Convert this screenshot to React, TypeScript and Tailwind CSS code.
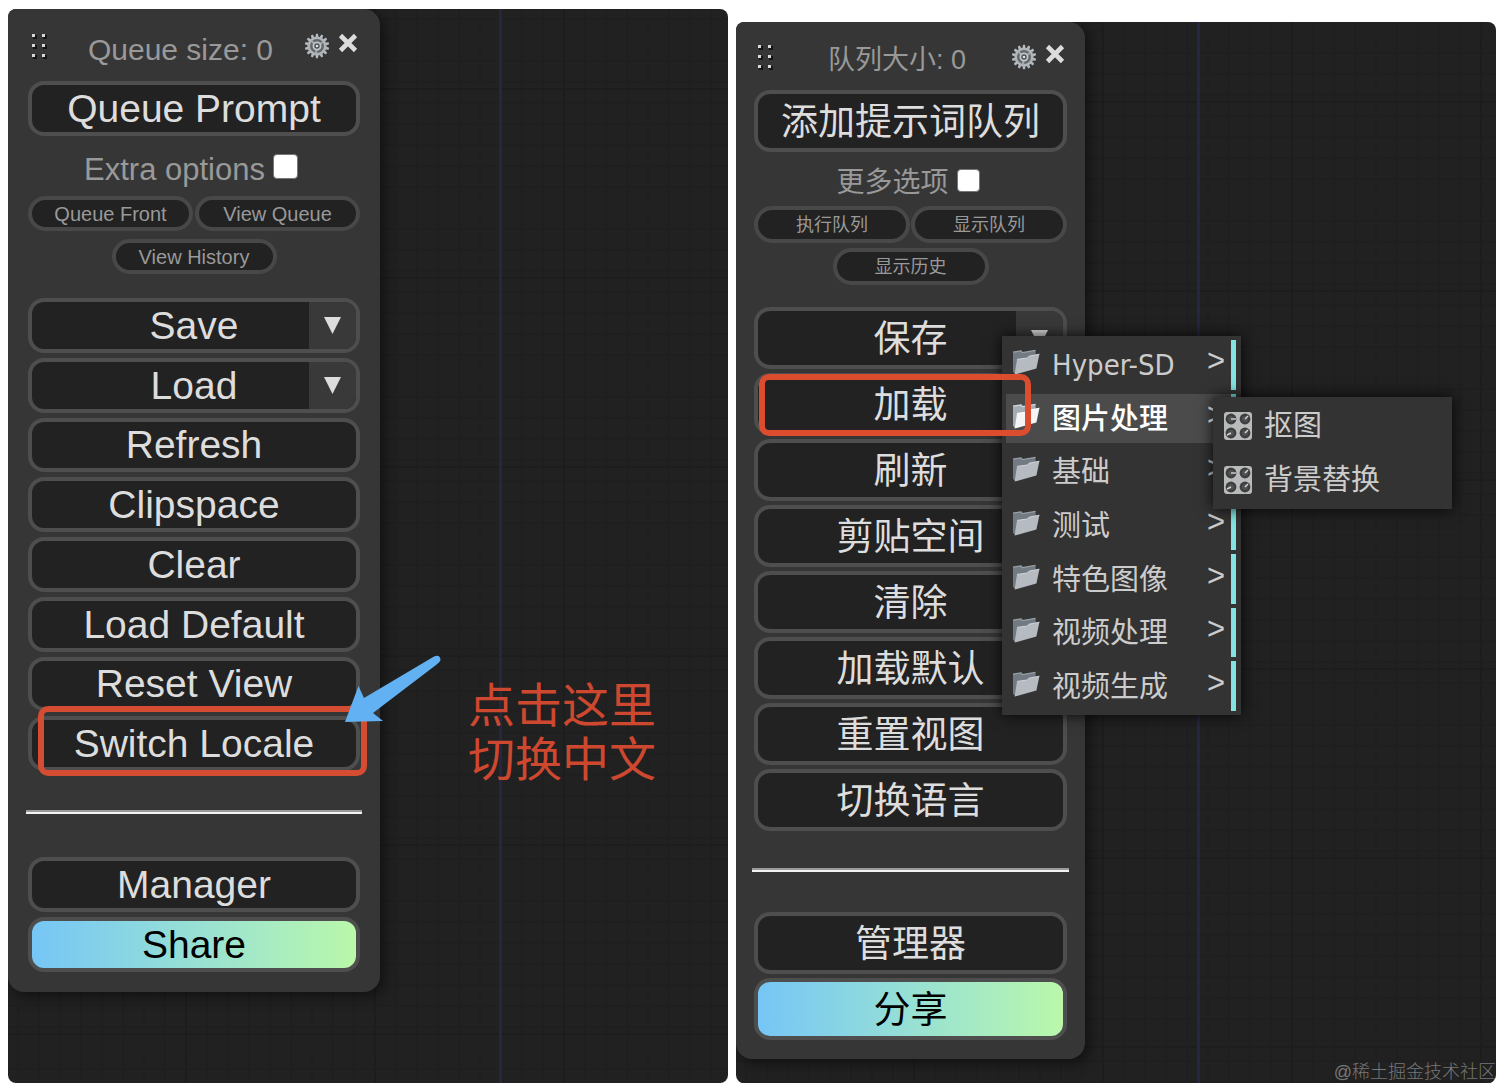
import { ReactNode } from "react";
import clsx from "clsx";

const english = {
    id: "en",
    queueSize: "Queue size: 0",
    queuePrompt: "Queue Prompt",
    extraOptions: "Extra options",
    queueFront: "Queue Front",
    viewQueue: "View Queue",
    viewHistory: "View History",
    save: "Save",
    load: "Load",
    actions: ["Refresh", "Clipspace", "Clear", "Load Default", "Reset View"],
    switchLocale: "Switch Locale",
    manager: "Manager",
    share: "Share"
}

const chinese = {
    id: "zh",
    queueSize: "队列大小: 0",
    queuePrompt: "添加提示词队列",
    extraOptions: "更多选项",
    queueFront: "执行队列",
    viewQueue: "显示队列",
    viewHistory: "显示历史",
    save: "保存",
    load: "加载",
    actions: ["刷新", "剪贴空间", "清除", "加载默认", "重置视图"],
    switchLocale: "切换语言",
    manager: "管理器",
    share: "分享"
}

const englishSize = {
    panel: "w-[372px] px-5 pb-5",
    header: "h-[72px] pt-6",
    headerText: "text-[30px] leading-8 mt-px",
    button: "h-[55px] text-[39px]",
    row: "text-[39px]",
    extra: "h-[60px] pr-[6px] text-[31px]",
    check: "size-[25px]",
    smallGroup: "gap-x-[2px] gap-y-2 mb-6",
    small: "h-[35px] w-[165px] text-[20px]",
    list: "min-h-[473px] gap-[5px]",
    hr: "mt-[39px] mb-[43px]",
    footer: "gap-[5px]"
}

const chineseSize = {
    panel: "w-[349px] px-[18px] pb-[19px]",
    header: "h-[68px] pt-[22px]",
    headerText: "text-[27px] leading-8",
    button: "h-[62px] text-[37px] pt-[2px]",
    row: "text-[37px] pt-[2px]",
    extra: "h-[54px] pr-[5px] pt-[2px] text-[28px]",
    check: "size-[23px]",
    smallGroup: "gap-x-px gap-y-[5px] mb-[22px]",
    small: "h-[37px] w-[156px] text-[18px]",
    list: "min-h-[524px] gap-1",
    hr: "mt-[37px] mb-10",
    footer: "gap-1"
}

const folders = ["Hyper-SD", "图片处理", "基础", "测试", "特色图像", "视频处理", "视频生成"]
const workflows = ["抠图", "背景替换"]

function DragHandle() {
    return (
        <svg width="18" height="26" viewBox="0 0 18 26" aria-hidden="true">
            {[3, 13, 23].map((y) =>
                [2, 12].map((x) => (
                    <g key={x + "-" + y}>
                        <rect x={x} y={y - 1} width="4" height="4" fill="#161616" />
                        <rect x={x - 1} y={y - 2} width="3" height="3" fill="#d8d8d8" />
                    </g>
                ))
            )}
        </svg>
    );
}

function Gear() {
    return (
        <svg width="26" height="26" viewBox="0 0 26 26" aria-hidden="true">
            {Array.from({ length: 14 }, (_, i) => (
                <path key={i} d="M11.4 4.4 L12 .8 H14 L14.6 4.4 Z" fill="#b4b9bd" transform={`rotate(${(i * 360) / 14} 13 13)`} />
            ))}
            <circle cx="13" cy="13" r="8.2" fill="#62686c" stroke="#b0b5b9" strokeWidth="2.4" />
            <path d="M13 13 L7.5 8 M13 13 L19 9 M13 13 L12 20.5" stroke="#a3a8ac" strokeWidth="2" />
            <circle cx="13" cy="13" r="3.6" fill="#4a4f53" stroke="#c2c6ca" strokeWidth="1.8" />
            <circle cx="13" cy="13" r="1.3" fill="#e0e2e4" />
        </svg>
    );
}

function Cross() {
    return (
        <svg width="20" height="20" viewBox="0 0 20 20" aria-hidden="true">
            <path d="M2.5 2.5 L17.5 17.5 M17.5 2.5 L2.5 17.5" stroke="#dcdcdc" strokeWidth="4.6" />
        </svg>
    );
}

function Folder({ active }: { active?: boolean }) {
    return (
        <svg width="28" height="27" viewBox="0 0 28 27" aria-hidden="true">
            <path d="M1 3.2 L9 1.8 L10.4 3.6 L23.5 1.4 L24.4 17 L3 24.5 L1 23 Z" fill={active ? "#a5adb4" : "#727b83"} />
            <path d="M1 3.2 L9 1.8 L10.4 3.6 L23.5 1.4" fill="none" stroke={active ? "#d5dade" : "#98a1a8"} strokeWidth="1.2" />
            <path d="M5 10.4 L15.5 9 L17 7.2 L27.4 5.2 L24.4 19.6 L2.6 25.6 Z" fill={active ? "#f4f5f6" : "#b6bac1"} />
            <path d="M5 10.4 L15.5 9 L17 7.2 L27.4 5.2" fill="none" stroke={active ? "#ffffff" : "#d0d4d9"} strokeWidth="1" />
        </svg>
    );
}

function Knobs() {
    return (
        <svg width="28" height="28" viewBox="0 0 28 28" aria-hidden="true">
            <rect width="28" height="28" rx="3" fill="#b9bbbb" />
            {[
                [7, 7, 5, 0],
                [21, 7, 3, -3],
                [7, 21, -4, 2],
                [21, 21, 3, -3]
            ].map(([x, y, dx, dy]) => (
                <g key={x + "-" + y}>
                    <circle cx={x} cy={y} r="5.4" fill="#3c3e3f" />
                    <circle cx={x} cy={y} r="3" fill="#4f5152" />
                    <path d={`M${x} ${y} l${dx} ${dy}`} stroke="#d5d5d5" strokeWidth="1.4" />
                </g>
            ))}
        </svg>
    );
}

function SplitButton({ label, className }: { label: string, className: string }) {
    return (
        <div className="flex h-full w-full overflow-hidden rounded-2xl border-4 border-[#4e4e4e] bg-[#222]">
            <button className={clsx("flex-1 pl-[47px] leading-none text-[#ddd]", className)}>{label}</button>
            <button aria-label={label + " ▼"} className="flex w-[47px] items-center justify-center bg-[#393939]">
                <svg width="17" height="17" viewBox="0 0 17 17" aria-hidden="true">
                    <path d="M0 0 H17 L8.5 17 Z" fill="#ddd" />
                </svg>
            </button>
        </div>
    );
}

function FolderMenu() {
    return (
        <div className="absolute -top-[37px] left-[248px] z-10 w-[239px] bg-[#333] p-1 pr-[5px] shadow-[0_0_14px_rgba(0,0,0,0.85)]">
            <ul className="grid min-h-[371px] gap-1">
                {folders.map((folder, index) => (
                    <li key={folder} className="relative">
                        <button
                            className={clsx(
                                "flex h-full w-full items-center border-r-[5px] border-[#83e3e0] pr-[6px] pl-[6px] text-left font-['DejaVu_Sans_Condensed','Noto_Sans_CJK_SC',sans-serif] text-[29px] leading-none",
                                index === 1 ? "bg-[#4b4b4b] font-medium text-white" : "text-[#ccc]"
                            )}
                        >
                            <span className="pb-1">
                                <Folder active={index === 1} />
                            </span>
                            <span className="flex-1 pt-[2px] pl-3">{folder}</span>
                            <span className="pb-2 font-['Liberation_Sans',sans-serif] text-[31px]">&gt;</span>
                        </button>
                        {index === 1 && <WorkflowMenu />}
                    </li>
                ))}
            </ul>
        </div>
    );
}

function WorkflowMenu() {
    return (
        <ul className="absolute top-[3px] left-[207px] z-10 grid w-[239px] gap-1 bg-[#333] px-1 py-1 shadow-[0_0_14px_rgba(0,0,0,0.85)]">
            {workflows.map((workflow) => (
                <li key={workflow}>
                    <button className="flex h-[50px] w-full items-center gap-3 pl-[7px] text-[29px] leading-none text-[#ccc]">
                        <Knobs />
                        <span className="pt-[2px]">{workflow}</span>
                    </button>
                </li>
            ))}
        </ul>
    );
}

function Pointer() {
    return (
        <svg className="absolute -top-[61px] left-[316px] z-20" width="98" height="68" viewBox="0 0 98 68" aria-hidden="true">
            <path d="M1 67 L14.5 31 L20 43 L90 1.5 Q96 -1 96.5 5 Q96 7 92 10 L29 58 L39 66 Z" fill="#62b1f3" />
        </svg>
    );
}

type PanelProps = {
    text: typeof english
    size: typeof englishSize
    loadExtra?: ReactNode
    localeExtra?: ReactNode
}

function Panel({ text, size, loadExtra, localeExtra }: PanelProps) {
    const button = "w-full rounded-2xl border-4 border-[#4e4e4e] leading-none"
    const small = clsx("rounded-full border-4 border-[#484848] bg-[#222] leading-none text-[#999]", size.small)

    return (
        <aside className={clsx("shrink-0 rounded-2xl rounded-tl-lg bg-[#363636] shadow-[4px_4px_14px_rgba(0,0,0,0.5)]", size.panel)}>
            <div className={clsx("flex items-start pr-[2px] pl-[3px]", size.header)}>
                <DragHandle />
                <span className={clsx("flex-1 pl-2 text-center text-[#999]", size.headerText)}>{text.queueSize}</span>
                <button aria-label="settings">
                    <Gear />
                </button>
                <button aria-label="close" className="ml-2">
                    <Cross />
                </button>
            </div>

            <button className={clsx(button, "bg-[#222] text-[#ddd]", size.button)}>{text.queuePrompt}</button>

            <label htmlFor={"extra-" + text.id} className={clsx("flex items-center justify-center gap-2 leading-none text-[#999]", size.extra)}>
                <span className="pt-[6px]">{text.extraOptions}</span>
                <input id={"extra-" + text.id} type="checkbox" className={clsx("appearance-none rounded-[4px] border border-[#777] bg-white", size.check)} />
            </label>

            <div className={clsx("flex flex-wrap justify-center", size.smallGroup)}>
                <button className={small}>{text.queueFront}</button>
                <button className={small}>{text.viewQueue}</button>
                <button className={small}>{text.viewHistory}</button>
            </div>

            <div className={clsx("grid", size.list)}>
                <SplitButton label={text.save} className={size.row} />
                <div className="relative">
                    <SplitButton label={text.load} className={size.row} />
                    {loadExtra}
                </div>
                {text.actions.map((action) => (
                    <button key={action} className={clsx(button, "bg-[#222] text-[#ddd]", size.row)}>{action}</button>
                ))}
                <div className="relative">
                    <button className={clsx(button, "h-full bg-[#222] text-[#ddd]", size.row)}>{text.switchLocale}</button>
                    {localeExtra}
                </div>
            </div>

            <hr className={clsx("-mx-[2px] border-t-2 border-b-2 border-t-[#9a9a9a] border-b-[#f2f2f2]", size.hr)} />

            <div className={clsx("grid", size.footer)}>
                <button className={clsx(button, "bg-[#222] text-[#ddd]", size.button)}>{text.manager}</button>
                <button className={clsx(button, "bg-linear-to-r from-[#75c5f7] to-[#bbf8a8] bg-origin-border text-black", size.button)}>{text.share}</button>
            </div>
        </aside>
    );
}

function Grid({ id, axis }: { id: string, axis: number }) {
    return (
        <svg className="absolute inset-0 -z-10 h-full w-full" aria-hidden="true">
            <defs>
                <pattern id={id + "-minor"} width="21" height="21" patternUnits="userSpaceOnUse">
                    <path d="M0 10 H21 M10 0 V21" stroke="#1f1f1f" strokeWidth="2" />
                </pattern>
                <pattern id={id + "-major"} width="189" height="189" patternUnits="userSpaceOnUse">
                    <path d="M0 80 H189 M178 0 V189" stroke="#1d1d1d" strokeWidth="2" />
                </pattern>
            </defs>
            <rect width="100%" height="100%" fill={`url(#${id}-minor)`} />
            <rect width="100%" height="100%" fill={`url(#${id}-major)`} />
            <rect x={axis} width="3" height="100%" fill="#232740" />
        </svg>
    );
}

export default function App() {
    return (
        <main className="flex min-h-screen gap-2 bg-white px-2 pb-[7px] font-['Liberation_Sans','Noto_Sans_CJK_SC',sans-serif]">
            <section className="relative isolate mt-[9px] flex flex-[720] items-start overflow-hidden rounded-lg bg-[#212121]">
                <Grid id="left" axis={491} />
                <Panel
                    text={english}
                    size={englishSize}
                    localeExtra={
                        <>
                            <div className="pointer-events-none absolute -top-[10px] left-[10px] h-[70px] w-[329px] rounded-[10px] border-[6px] border-[#d44c31]" />
                            <Pointer />
                        </>
                    }
                />
                <p className="mt-[670px] ml-[88px] text-[47px] leading-[54px] text-[#cd482f]">
                    点击这里
                    <br />
                    切换中文
                </p>
            </section>

            <section className="relative isolate mt-[22px] flex flex-[760] items-start overflow-hidden rounded-lg bg-[#212121] pb-6">
                <Grid id="right" axis={461} />
                <Panel
                    text={chinese}
                    size={chineseSize}
                    loadExtra={
                        <>
                            <FolderMenu />
                            <div className="pointer-events-none absolute top-px left-[5px] z-20 h-[62px] w-[272px] rounded-[10px] border-[6px] border-[#dc4c2e]" />
                        </>
                    }
                />
                <p className="absolute right-0 bottom-0 text-[18px] leading-[22px] font-light text-[#777]">@稀土掘金技术社区</p>
            </section>
        </main>
    );
}
